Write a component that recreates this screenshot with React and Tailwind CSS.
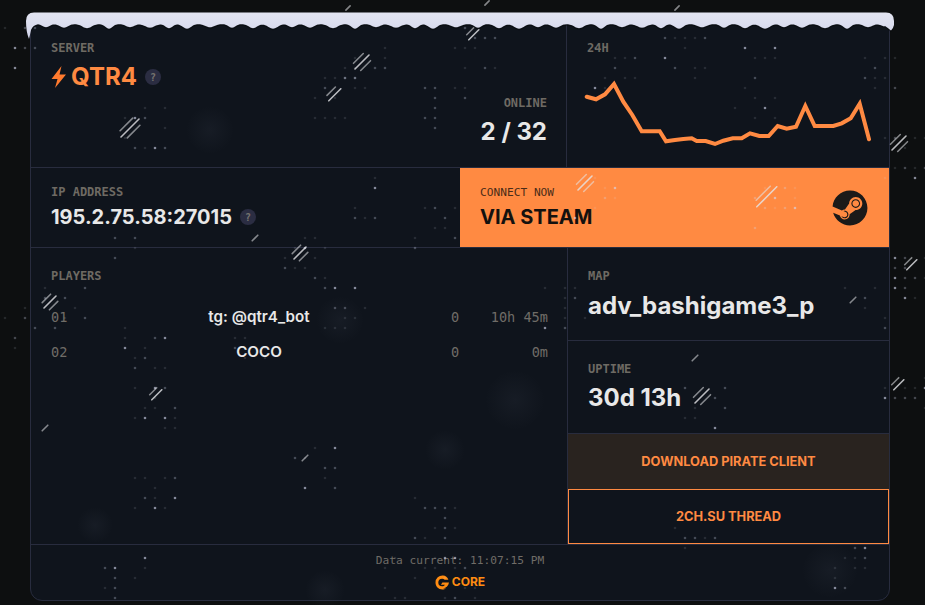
import React from 'react';
import { FaSteam } from 'react-icons/fa';

const ORANGE = '#ff8a42';
const MONO = "font-['DejaVu_Sans_Mono',monospace]";

const chartPoints = [
  [6.7, 26.7], [16, 29.3], [25, 24.3], [34, 14], [43.3, 31.7], [52.3, 45], [61.7, 61.3], [70.7, 61.3],
  [79.7, 61.3], [86, 71.3], [95, 70], [103.3, 69], [111.7, 68.3], [116.7, 71], [125.7, 71], [135, 74],
  [143.3, 70.7], [152.7, 68.3], [161.7, 68.3], [170, 63.3], [179.3, 66], [188.7, 66], [197.7, 56],
  [206.7, 58.7], [216, 56.7], [225.3, 36], [234.7, 56], [243.7, 56], [253.3, 56], [261.7, 53.3],
  [270.7, 48.3], [279.7, 33.7], [289, 69.3],
];

// snow cap outline: flat top, wavy lower edge with small drips
const buildSnowPath = () => {
  const drips = [];
  let pos = 46;
  let i = 0;
  while (pos < 892) {
    drips.push(pos);
    pos += 18 + ((i * 5) % 6);
    i++;
  }
  let d = 'M26 21 Q26 12.500 34 12.500 L886 12.500 Q894 12.500 894 21 L894 25 Q893.500 28 891 30.500 Q888 28 885 26';
  for (let x = 884; x >= 38; x -= 1) {
    let y = 24;
    drips.forEach((p, k) => {
      const w = 5 + (k % 3) * 0.8;
      y += (3.2 + (k % 4) * 0.5) * Math.exp(-((x - p) * (x - p)) / (w * w));
    });
    d += ` L${x} ${y.toFixed(2)}`;
  }
  d += ' Q33 25 31 30 Q30 35 29 39 Q26 32 26 21 Z';
  return d;
};

const streakClusters = [
  [130, 128, 3, 9], [362, 62, 3, 7], [333, 93, 2, 6], [472, 33, 2, 5], [300, 253, 3, 6], [50, 302, 3, 6], [155, 393, 2, 5],
  [45, 428, 1, 4], [305, 458, 1, 4], [255, 238, 1, 4], [585, 183, 3, 7], [765, 195, 2, 10], [899, 143, 3, 7], [702, 396, 3, 7],
  [897, 383, 2, 5], [853, 300, 1, 4], [695, 358, 1, 4], [910, 263, 2, 5], [677, 8, 1, 3], [348, 8, 1, 3], [487, 3, 1, 3],
];

const dotClusters = [
  [135, 115], [325, 90], [360, 60], [440, 100], [470, 40], [610, 60], [680, 45], [745, 50], [750, 100],
  [870, 60], [430, 215], [590, 185], [770, 195], [300, 250], [345, 185], [130, 230], [335, 295], [60, 295],
  [135, 335], [560, 300], [855, 300], [150, 395], [700, 395], [305, 458], [150, 490], [430, 510],
  [400, 570], [450, 565], [690, 530], [900, 150], [905, 265], [5, 320], [20, 35], [900, 385],
  [240, 330], [120, 570], [850, 560],
];

const buildDots = () => {
  const dots = [];
  dotClusters.forEach(([cx, cy], c) => {
    for (let gx = -2; gx <= 2; gx++) {
      for (let gy = -2; gy <= 2; gy++) {
        const h = Math.abs(Math.sin((c + 1) * 12.9 + gx * 78.2 + gy * 37.7) * 43758.5) % 1;
        if (h > 0.4) continue;
        const x = Math.round(cx / 10) * 10 + 5 + gx * 10;
        const y = Math.round(cy / 10) * 10 + 8 + gy * 10;
        dots.push({ x, y, o: h < 0.06 ? 0.6 : h < 0.18 ? 0.28 : 0.12 });
      }
    }
  });
  return dots;
};

const SnowOverlay = () => {
  const dots = buildDots();
  const snow = buildSnowPath();
  return (
    <svg className="absolute inset-0 pointer-events-none" width="925" height="605" viewBox="0 0 925 605">
      <defs>
        <radialGradient id="glow">
          <stop offset="0%" stopColor="#aab4d0" stopOpacity="0.05" />
          <stop offset="100%" stopColor="#aab4d0" stopOpacity="0" />
        </radialGradient>
        <linearGradient id="snowFill" x1="0" y1="0" x2="0" y2="1">
          <stop offset="0%" stopColor="#e3e5f2" />
          <stop offset="100%" stopColor="#d2d5ea" />
        </linearGradient>
      </defs>
      {[[515, 400, 30], [340, 320, 24], [210, 130, 24], [95, 525, 18], [830, 570, 28], [325, 590, 20], [445, 450, 20]].map(([x, y, r]) => (
        <circle key={`${x}-${y}`} cx={x} cy={y} r={r} fill="url(#glow)" />
      ))}
      {dots.map((d, i) => (
        <circle key={i} cx={d.x} cy={d.y} r="1.300" fill="#d5daf2" opacity={d.o} />
      ))}
      {streakClusters.map(([x, y, n, len], i) => (
        <g key={i} stroke="#e6e7ea" strokeWidth="1.600" strokeLinecap="round">
          {Array.from({ length: n }).map((_, k) => {
            const off = (k - (n - 1) / 2) * 3.600;
            const l = k % 2 ? len : len * 0.7;
            return (
              <line
                key={k}
                x1={x + off - l}
                y1={y + off + l}
                x2={x + off + l}
                y2={y + off - l}
                opacity={k % 2 ? 0.8 : 0.55}
              />
            );
          })}
        </g>
      ))}
      <path d={snow} fill="#05070a" opacity="0.5" transform="translate(0 1.500)" />
      <path d={snow} fill="url(#snowFill)" />
    </svg>
  );
};

const Label = ({ children }) => (
  <div className={`text-[12px] leading-[16px] font-bold text-[#6e6a63] ${MONO}`}>
    {children}
  </div>
);

const Help = () => (
  <span className={`flex items-center justify-center w-4 h-4 rounded-full bg-[#2b2d42] text-[10px] font-bold text-[#77746f] ${MONO}`}>
    ?
  </span>
);

const PlayerRow = ({ index, name, score, time }) => (
  <div className={`grid grid-cols-[40px_336px_56px_65px] items-center h-[35px] text-[13.6px] text-[#6f6c67] ${MONO}`}>
    <span>{index}</span>
    <span className="text-center font-['Inter',sans-serif] font-semibold text-[15.2px] text-[#e8e8e8]">{name}</span>
    <span className="text-center">{score}</span>
    <span className="text-right">{time}</span>
  </div>
);

const CoreLogo = () => (
  <svg width="15" height="15" viewBox="0 0 15 15">
    <path
      d="M8 .5a7 7 0 0 0-7.500 7c0 3.900 3 7 6.800 7 1.500 0 2.900-.5 4-1.300-1 .3-2.100.3-3.100 0 3-.3 5.300-2.500 5.800-5.700H7.400L5.900 9.700h4c-.6 1-1.700 1.600-2.800 1.600a3.800 3.800 0 0 1 0-7.600c1 0 1.900.3 2.600 1h3.700C12.600 2.400 10.500.5 8 .5Z"
      fill="#ff8c12"
    />
  </svg>
);

export default function App() {
  return (
    <div className="relative h-[605px] w-[925px] overflow-hidden bg-[#0d0f10] font-['Inter',sans-serif]">
      <div className="pt-[15px] pl-[30px]">
        <div className="flex flex-col w-[860px] h-[586px] bg-[#0f141c] border border-[#282c3e] rounded-b-[12px] overflow-hidden">
          {/* Top row */}
          <div className="flex h-[152px] border-b border-[#282c3e]">
            <div className="flex flex-col w-[536px] pl-[20px] pr-[19px] pt-[24px] border-r border-[#282c3e]">
              <Label>SERVER</Label>
              <div className="flex items-center mt-[6px] h-[30px]">
                <svg width="16" height="22" viewBox="0 0 16 22" className="mr-[4px]">
                  <path d="M10.500 0 0.500 13h6L4 22 15 8.500H8.500Z" fill="#ff7a2e" />
                </svg>
                <span className="text-[24px] font-bold text-[#ff8a42]">QTR4</span>
                <span className="ml-[8px]"><Help /></span>
              </div>
              <div className="flex flex-col items-end mt-[3px]">
                <Label>ONLINE</Label>
                <div className="mt-[6px] text-[24px] leading-[30px] font-bold text-[#e8e8e8]">2 / 32</div>
              </div>
            </div>
            <div className="flex-1 pt-[24px]">
              <div className="pl-[20px]"><Label>24H</Label></div>
              <svg width="300" height="80" viewBox="0 0 300 80" className="mt-[14px] ml-[13px]">
                <polyline
                  points={chartPoints.map((p) => p.join(',')).join(' ')}
                  fill="none"
                  stroke={ORANGE}
                  strokeWidth="4"
                  strokeLinejoin="miter"
                  strokeLinecap="round"
                />
              </svg>
            </div>
          </div>

          {/* Address row */}
          <div className="flex h-[80px] border-b border-[#282c3e]">
            <div className="flex flex-col w-[429px] pl-[20px] pt-[16px]">
              <Label>IP ADDRESS</Label>
              <div className="flex items-center mt-[2px]">
                <span className="text-[20px] leading-[30px] font-bold text-[#e8e8e8]">195.2.75.58:27015</span>
                <span className="ml-[8px]"><Help /></span>
              </div>
            </div>
            <div className="flex flex-1 items-center justify-between pl-[20px] pr-[21px] bg-[#ff8a42]">
              <div>
                <div className={`text-[11.2px] leading-[16px] text-[#4a2c18] ${MONO}`}>CONNECT NOW</div>
                <div className="mt-[2px] text-[20px] leading-[28px] font-bold text-[#14110f]">VIA STEAM</div>
              </div>
              <FaSteam className="w-[36px] h-[36px] text-[#1b1a19]" />
            </div>
          </div>

          {/* Players and server details */}
          <div className="flex flex-1 border-b border-[#282c3e]">
            <div className="w-[537px] pl-[20px] pt-[20px] border-r border-[#282c3e]">
              <Label>PLAYERS</Label>
              <div className="mt-[16px]">
                <PlayerRow index="01" name="tg: @qtr4_bot" score="0" time="10h 45m" />
                <PlayerRow index="02" name="COCO" score="0" time="0m" />
              </div>
            </div>
            <div className="flex flex-col flex-1">
              <div className="h-[93px] pl-[20px] pt-[20px] border-b border-[#282c3e]">
                <Label>MAP</Label>
                <div className="mt-[6px] text-[24px] leading-[32px] font-bold text-[#e8e8e8]">adv_bashigame3_p</div>
              </div>
              <div className="h-[93px] pl-[20px] pt-[20px] border-b border-[#282c3e]">
                <Label>UPTIME</Label>
                <div className="mt-[5px] text-[24px] leading-[32px] font-bold text-[#e8e8e8]">30d 13h</div>
              </div>
              <div className="flex items-center justify-center h-[55px] bg-[#29231f] text-[12.8px] font-bold text-[#ff8a42]">
                DOWNLOAD PIRATE CLIENT
              </div>
              <div className="flex items-center justify-center flex-1 border border-[#ff8a42] text-[12.8px] font-bold text-[#ff8a42]">
                2CH.SU THREAD
              </div>
            </div>
          </div>

          {/* Footer */}
          <div className="flex flex-col items-center flex-1 pt-[8px] h-[55px] max-h-[55px]">
            <div className={`text-[11.2px] leading-[16px] text-[#6f6c67] ${MONO}`}>
              Data current: 11:07:15 PM
            </div>
            <div className="flex items-center gap-[2px] mt-[5px]">
              <CoreLogo />
              <span className="text-[12px] leading-[16px] font-bold text-[#ff8c12]">CORE</span>
            </div>
          </div>
        </div>
      </div>
      <SnowOverlay />
    </div>
  );
}
